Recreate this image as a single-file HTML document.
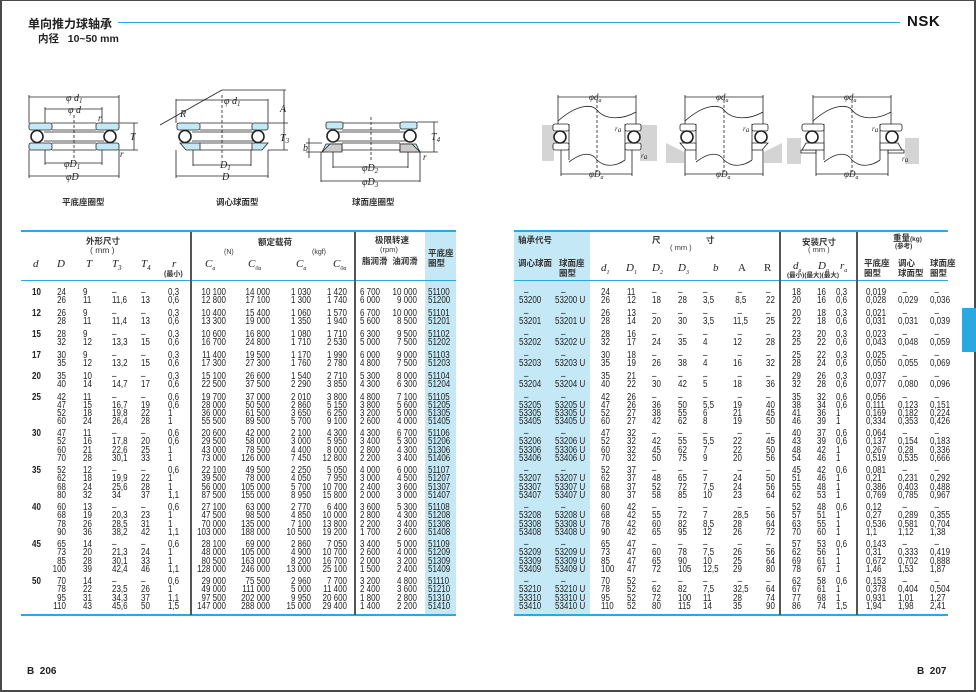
<!DOCTYPE html>
<html><head><meta charset="utf-8">
<style>
*{margin:0;padding:0;box-sizing:border-box}
body{width:976px;height:692px;position:relative;background:#fff;overflow:hidden;font-family:"Liberation Sans","Noto Sans CJK SC",sans-serif;color:#222}
.frame{position:absolute;left:0;top:0;width:976px;height:692px;border:2px solid #4a4a4a;border-top-width:1px}
.abs{position:absolute}
.cj{font-family:"Liberation Sans","Noto Sans CJK SC",sans-serif;font-size:8.5px;font-weight:bold;color:#333;white-space:nowrap;line-height:10px}
.it{font-family:"Liberation Serif",serif;font-style:italic;font-size:11px;color:#222}
.r{position:absolute;left:0;height:9px;width:976px;font-family:"Liberation Sans",sans-serif;font-size:10px;line-height:9px;white-space:nowrap}
.r i{position:absolute;font-style:normal;top:0;transform:scaleX(.8);transform-origin:left center}
.r i.rt{transform-origin:right center}
.ld{left:32px;font-weight:bold}
.lD{left:40px;width:26px;text-align:right}
.lT{left:83px}.l3{left:112px}.l4{left:141px}.lr{left:168px}
.n1{left:180px;width:46px;text-align:right}
.n2{left:224px;width:46px;text-align:right}
.k1{left:271px;width:40px;text-align:right}
.k2{left:307px;width:40px;text-align:right}
.g{left:350px;width:30px;text-align:right}
.o{left:380px;width:37px;text-align:right}
.cd{left:428px}
.c1{left:519px}.c2{left:555px}
.c1d{left:524px}.c2d{left:561px}
.p1{left:601px}.p2{left:627px}.p3{left:652px}.p4{left:678px}.pb{left:703px}.pA{left:733px}.pR{left:766px}
.q1{left:792px}.q2{left:817px}.q3{left:836px}
.w1{left:866px}.w2{left:898px}.w3{left:930px}
</style></head><body>
<div class="frame"></div>

<div class="abs" style="left:28px;top:15px;font-size:12px;font-weight:bold;color:#222;font-family:'Liberation Sans','Noto Sans CJK SC',sans-serif">单向推力球轴承</div>
<div class="abs" style="left:118px;top:22px;width:782px;height:1px;background:#29a9e0"></div>
<div class="abs" style="left:38px;top:31px;font-size:10.5px;font-weight:bold;font-family:'Liberation Sans','Noto Sans CJK SC',sans-serif">内径&nbsp;&nbsp;&nbsp;10~50 mm</div>
<div class="abs" style="left:907px;top:13px;font-size:15px;font-weight:bold;letter-spacing:0.5px;color:#111">NSK</div>

<svg class="abs" style="left:0;top:80px" width="976" height="135" viewBox="0 80 976 135" font-family="Liberation Serif" font-style="italic" font-size="10">
<g stroke="#222" stroke-width="0.8" fill="none">
 <path d="M29 95V123M119 95V123M29 97H119M45 107V123M102 107V123M45 109H102"/>
 <path d="M29 150V178M119 150V178M29 176H119M45 150V165M102 150V165M45 163H102"/>
 <path d="M52 123H96M52 130H96M44 132H104M44 141H104M52 143H96M52 150H96"/>
 <rect x="29" y="123" width="23" height="7" rx="2" fill="#c5e8f7"/><rect x="96" y="123" width="23" height="7" rx="2" fill="#c5e8f7"/>
 <rect x="29" y="143" width="23" height="7" rx="2" fill="#c5e8f7"/><rect x="96" y="143" width="23" height="7" rx="2" fill="#c5e8f7"/>
 <circle cx="37" cy="136.5" r="6" fill="#fff" stroke-width="1.6"/><circle cx="110" cy="136.5" r="6" fill="#fff" stroke-width="1.6"/>
 <path d="M74 115V158" stroke-dasharray="3 2"/>
 <path d="M119 123H138M119 150H138M134 123V150"/>
 <path d="M176 99V123M268 99V123M176 100H268M222 90H286M284 90V150M268 123H288M268 150H288"/>
 <path d="M222 90L160 125"/>
 <path d="M176 150V178M268 150V178M176 176H268M193 150V166M251 150V166M193 165H251"/>
 <path d="M200 123H252M200 130H252M192 132H260M192 141H260M200 143H252M200 150H252"/>
 <rect x="177" y="123" width="23" height="7" rx="2" fill="#c5e8f7"/><rect x="252" y="123" width="16" height="7" rx="2" fill="#c5e8f7"/>
 <path d="M180 143H200V150H186Z" fill="#c5e8f7"/><path d="M252 143H268L262 150H252Z" fill="#c5e8f7"/>
 <circle cx="185" cy="136.5" r="6" fill="#fff" stroke-width="1.6"/><circle cx="258" cy="136.5" r="6" fill="#fff" stroke-width="1.6"/>
 <path d="M222 95V158" stroke-dasharray="3 2"/>
 <path d="M342 123H400M342 130H400M334 132H408M334 141H408M342 143H400M342 150H400"/>
 <rect x="326" y="122" width="17" height="7" rx="2" fill="#c5e8f7"/><rect x="400" y="122" width="17" height="7" rx="2" fill="#c5e8f7"/>
 <path d="M322 152L326 144H342V150Z" fill="#c5e8f7"/><path d="M400 144H416L420 152H400Z" fill="#c5e8f7"/>
 <path d="M322 152L330 144H342V152Z" fill="#ccc"/><path d="M400 152V144H412L420 152Z" fill="#ccc"/>
 <circle cx="333" cy="136" r="6" fill="#fff" stroke-width="1.6"/><circle cx="410" cy="136" r="6" fill="#fff" stroke-width="1.6"/>
 <path d="M371 117V160" stroke-dasharray="3 2"/>
 <path d="M333 152V168M408 152V168M333 167H408M321 152V182M420 152V182M321 181H420"/>
 <path d="M417 122H438M420 152H438M434 122V152M306 143H322M306 152H322M309 138V158"/>
</g>
<g fill="#222">
 <text x="66" y="101">φ d<tspan font-size="7" dy="2">1</tspan></text>
 <text x="68" y="113">φ d</text>
 <text x="98" y="121" font-size="9">r</text>
 <text x="64" y="167">φD<tspan font-size="7" dy="2">1</tspan></text>
 <text x="66" y="180">φD</text>
 <text x="130" y="140">T</text>
 <text x="120" y="157" font-size="9">r</text>
 <text x="224" y="104">φ d<tspan font-size="7" dy="2">1</tspan></text>
 <text x="180" y="117">R</text>
 <text x="280" y="112">A</text>
 <text x="280" y="141">T<tspan font-size="7" dy="2">3</tspan></text>
 <text x="220" y="168">D<tspan font-size="7" dy="2">1</tspan></text>
 <text x="222" y="180">D</text>
 <text x="362" y="171">φD<tspan font-size="7" dy="2">2</tspan></text>
 <text x="362" y="185">φD<tspan font-size="7" dy="2">3</tspan></text>
 <text x="431" y="140">T<tspan font-size="7" dy="2">4</tspan></text>
 <text x="303" y="151">b</text>
 <text x="423" y="160" font-size="9">r</text>
</g>
<g stroke="#222" stroke-width="0.8" fill="none">
 <g transform="translate(597,0)">
  <rect x="-55" y="125" width="12" height="36" fill="#d4d4d4" stroke="none"/><rect x="43" y="125" width="17" height="36" fill="#d4d4d4" stroke="none"/>
  <path d="M-39 95V124M39 95V124M-39 97H39"/>
  <path d="M-39 121C-20 104 -5 104 0 110C8 120 25 120 39 112"/>
  <path d="M-28 124V160M28 124V160M-28 162C-15 152 -5 152 0 160C8 168 20 166 28 160"/>
  <rect x="-44" y="124" width="16" height="7" rx="2" fill="#fff"/><rect x="28" y="124" width="16" height="7" rx="2" fill="#fff"/>
  <rect x="-44" y="143" width="16" height="7" rx="2" fill="#fff"/><rect x="28" y="143" width="16" height="7" rx="2" fill="#fff"/>
  <circle cx="-37" cy="137" r="6" fill="#fff" stroke-width="1.6"/><circle cx="37" cy="137" r="6" fill="#fff" stroke-width="1.6"/>
  <path d="M0 100V172" stroke-dasharray="3 2"/>
  <path d="M-36 150V176M35 150V176M-36 174H35"/>
 </g>
 <g transform="translate(724,0)">
  <path d="M-58 143L-40 152V163H-58Z" fill="#d4d4d4" stroke="none"/><path d="M58 143L40 152V163H58Z" fill="#d4d4d4" stroke="none"/>
  <path d="M-39 95V124M39 95V124M-39 97H39"/>
  <path d="M-39 121C-20 104 -5 104 0 110C8 120 25 120 39 112"/>
  <path d="M-28 124V160M28 124V160M-28 162C-15 152 -5 152 0 160C8 168 20 166 28 160"/>
  <rect x="-44" y="124" width="16" height="7" rx="2" fill="#fff"/><rect x="28" y="124" width="16" height="7" rx="2" fill="#fff"/>
  <path d="M-44 143H-28V150H-38Z" fill="#fff"/><path d="M28 143H44L38 150H28Z" fill="#fff"/>
  <circle cx="-37" cy="137" r="6" fill="#fff" stroke-width="1.6"/><circle cx="37" cy="137" r="6" fill="#fff" stroke-width="1.6"/>
  <path d="M0 100V172" stroke-dasharray="3 2"/>
  <path d="M-39 150V176M39 150V176M-39 174H39"/>
 </g>
 <g transform="translate(852,0)">
  <rect x="-65" y="138" width="14" height="26" fill="#d4d4d4" stroke="none"/><rect x="53" y="138" width="14" height="26" fill="#d4d4d4" stroke="none"/>
  <path d="M-51 150H-36V153H-51ZM36 150H52V153H36Z" fill="#fff"/>
  <path d="M-39 95V124M39 95V124M-39 97H39"/>
  <path d="M-39 121C-20 104 -5 104 0 110C8 120 25 120 39 112"/>
  <path d="M-28 124V160M28 124V160M-28 162C-15 152 -5 152 0 160C8 168 20 166 28 160"/>
  <rect x="-50" y="124" width="22" height="7" rx="2" fill="#fff"/><rect x="28" y="124" width="22" height="7" rx="2" fill="#fff"/>
  <path d="M-46 143H-28V150H-50Z" fill="#fff"/><path d="M28 143H46L50 150H28Z" fill="#fff"/>
  <circle cx="-40" cy="137" r="6" fill="#fff" stroke-width="1.6"/><circle cx="40" cy="137" r="6" fill="#fff" stroke-width="1.6"/>
  <path d="M0 100V172" stroke-dasharray="3 2"/>
  <path d="M-36 150V176M36 150V176M-36 174H36"/>
 </g>
</g>
<g fill="#222" font-size="9">
 <text x="589" y="100">φd<tspan font-size="6" dy="2">a</tspan></text>
 <text x="589" y="177">φD<tspan font-size="6" dy="2">a</tspan></text>
 <text x="615" y="131" font-size="7">r<tspan dy="1">a</tspan></text>
 <text x="641" y="158" font-size="7">r<tspan dy="1">a</tspan></text>
 <text x="716" y="100">φd<tspan font-size="6" dy="2">a</tspan></text>
 <text x="716" y="177">φD<tspan font-size="6" dy="2">a</tspan></text>
 <text x="743" y="131" font-size="7">r<tspan dy="1">a</tspan></text>
 <text x="844" y="100">φd<tspan font-size="6" dy="2">a</tspan></text>
 <text x="844" y="177">φD<tspan font-size="6" dy="2">a</tspan></text>
 <text x="872" y="131" font-size="7">r<tspan dy="1">a</tspan></text>
 <text x="902" y="161" font-size="7">r<tspan dy="1">a</tspan></text>
</g>
</svg>
<div class="abs cj" style="left:62px;top:197px">平底座圈型</div>
<div class="abs cj" style="left:216px;top:197px">调心球面型</div>
<div class="abs cj" style="left:352px;top:197px">球面座圈型</div>

<div class="abs" style="left:425px;top:232px;width:31px;height:383px;background:#c5e8f7"></div>
<div class="abs" style="left:21px;top:230px;width:435px;height:2px;background:#29a9e0"></div>
<div class="abs" style="left:21px;top:280px;width:435px;height:1px;background:#29a9e0"></div>
<div class="abs" style="left:21px;top:614px;width:435px;height:2px;background:#29a9e0"></div>
<div class="abs" style="left:190px;top:232px;width:1.5px;height:383px;background:#555"></div>
<div class="abs" style="left:354px;top:232px;width:1.5px;height:383px;background:#555"></div>

<div class="abs cj" style="left:86px;top:236px">外形尺寸</div>
<div class="abs cj" style="left:90px;top:245px;font-weight:normal">( mm )</div>
<div class="abs it" style="left:33px;top:258px">d</div>
<div class="abs it" style="left:57px;top:258px">D</div>
<div class="abs it" style="left:86px;top:258px">T</div>
<div class="abs it" style="left:112px;top:258px">T<sub style="font-size:7px">3</sub></div>
<div class="abs it" style="left:141px;top:258px">T<sub style="font-size:7px">4</sub></div>
<div class="abs it" style="left:172px;top:258px">r</div>
<div class="abs cj" style="left:164px;top:270px;font-size:7px">(最小)</div>
<div class="abs cj" style="left:258px;top:237px">额定载荷</div>
<div class="abs cj" style="left:224px;top:248px;font-size:7px;font-weight:normal">(N)</div>
<div class="abs cj" style="left:312px;top:248px;font-size:7px;font-weight:normal">(kgf)</div>
<div class="abs it" style="left:205px;top:258px">C<sub style="font-size:6px">a</sub></div>
<div class="abs it" style="left:248px;top:258px">C<sub style="font-size:6px">0a</sub></div>
<div class="abs it" style="left:296px;top:258px">C<sub style="font-size:6px">a</sub></div>
<div class="abs it" style="left:333px;top:258px">C<sub style="font-size:6px">0a</sub></div>
<div class="abs cj" style="left:375px;top:235px">极限转速</div>
<div class="abs cj" style="left:380px;top:245px;font-size:7.5px;font-weight:normal">(rpm)</div>
<div class="abs cj" style="left:362px;top:256px">脂润滑&nbsp;&nbsp;油润滑</div>
<div class="abs cj" style="left:428px;top:248px;width:28px;white-space:normal">平底座圈型</div>

<div class="r" style="top:288px"><i class="ld">10</i><i class="lD rt">24</i><i class="lT">9</i><i class="l3">–</i><i class="l4">–</i><i class="lr">0,3</i><i class="n1 rt">10 100</i><i class="n2 rt">14 000</i><i class="k1 rt">1 030</i><i class="k2 rt">1 420</i><i class="g rt">6 700</i><i class="o rt">10 000</i><i class="cd">51100</i></div>
<div class="r" style="top:296px"><i class="lD rt">26</i><i class="lT">11</i><i class="l3">11,6</i><i class="l4">13</i><i class="lr">0,6</i><i class="n1 rt">12 800</i><i class="n2 rt">17 100</i><i class="k1 rt">1 300</i><i class="k2 rt">1 740</i><i class="g rt">6 000</i><i class="o rt">9 000</i><i class="cd">51200</i></div>
<div class="r" style="top:309px"><i class="ld">12</i><i class="lD rt">26</i><i class="lT">9</i><i class="l3">–</i><i class="l4">–</i><i class="lr">0,3</i><i class="n1 rt">10 400</i><i class="n2 rt">15 400</i><i class="k1 rt">1 060</i><i class="k2 rt">1 570</i><i class="g rt">6 700</i><i class="o rt">10 000</i><i class="cd">51101</i></div>
<div class="r" style="top:317px"><i class="lD rt">28</i><i class="lT">11</i><i class="l3">11,4</i><i class="l4">13</i><i class="lr">0,6</i><i class="n1 rt">13 300</i><i class="n2 rt">19 000</i><i class="k1 rt">1 350</i><i class="k2 rt">1 940</i><i class="g rt">5 600</i><i class="o rt">8 500</i><i class="cd">51201</i></div>
<div class="r" style="top:330px"><i class="ld">15</i><i class="lD rt">28</i><i class="lT">9</i><i class="l3">–</i><i class="l4">–</i><i class="lr">0,3</i><i class="n1 rt">10 600</i><i class="n2 rt">16 800</i><i class="k1 rt">1 080</i><i class="k2 rt">1 710</i><i class="g rt">6 300</i><i class="o rt">9 500</i><i class="cd">51102</i></div>
<div class="r" style="top:338px"><i class="lD rt">32</i><i class="lT">12</i><i class="l3">13,3</i><i class="l4">15</i><i class="lr">0,6</i><i class="n1 rt">16 700</i><i class="n2 rt">24 800</i><i class="k1 rt">1 710</i><i class="k2 rt">2 530</i><i class="g rt">5 000</i><i class="o rt">7 500</i><i class="cd">51202</i></div>
<div class="r" style="top:351px"><i class="ld">17</i><i class="lD rt">30</i><i class="lT">9</i><i class="l3">–</i><i class="l4">–</i><i class="lr">0,3</i><i class="n1 rt">11 400</i><i class="n2 rt">19 500</i><i class="k1 rt">1 170</i><i class="k2 rt">1 990</i><i class="g rt">6 000</i><i class="o rt">9 000</i><i class="cd">51103</i></div>
<div class="r" style="top:359px"><i class="lD rt">35</i><i class="lT">12</i><i class="l3">13,2</i><i class="l4">15</i><i class="lr">0,6</i><i class="n1 rt">17 300</i><i class="n2 rt">27 300</i><i class="k1 rt">1 760</i><i class="k2 rt">2 780</i><i class="g rt">4 800</i><i class="o rt">7 500</i><i class="cd">51203</i></div>
<div class="r" style="top:372px"><i class="ld">20</i><i class="lD rt">35</i><i class="lT">10</i><i class="l3">–</i><i class="l4">–</i><i class="lr">0,3</i><i class="n1 rt">15 100</i><i class="n2 rt">26 600</i><i class="k1 rt">1 540</i><i class="k2 rt">2 710</i><i class="g rt">5 300</i><i class="o rt">8 000</i><i class="cd">51104</i></div>
<div class="r" style="top:380px"><i class="lD rt">40</i><i class="lT">14</i><i class="l3">14,7</i><i class="l4">17</i><i class="lr">0,6</i><i class="n1 rt">22 500</i><i class="n2 rt">37 500</i><i class="k1 rt">2 290</i><i class="k2 rt">3 850</i><i class="g rt">4 300</i><i class="o rt">6 300</i><i class="cd">51204</i></div>

<div class="r" style="top:393px"><i class="ld">25</i><i class="lD rt">42</i><i class="lT">11</i><i class="l3">–</i><i class="l4">–</i><i class="lr">0,6</i><i class="n1 rt">19 700</i><i class="n2 rt">37 000</i><i class="k1 rt">2 010</i><i class="k2 rt">3 800</i><i class="g rt">4 800</i><i class="o rt">7 100</i><i class="cd">51105</i></div>
<div class="r" style="top:401px"><i class="lD rt">47</i><i class="lT">15</i><i class="l3">16,7</i><i class="l4">19</i><i class="lr">0,6</i><i class="n1 rt">28 000</i><i class="n2 rt">50 500</i><i class="k1 rt">2 860</i><i class="k2 rt">5 150</i><i class="g rt">3 800</i><i class="o rt">5 600</i><i class="cd">51205</i></div>
<div class="r" style="top:409px"><i class="lD rt">52</i><i class="lT">18</i><i class="l3">19,8</i><i class="l4">22</i><i class="lr">1</i><i class="n1 rt">36 000</i><i class="n2 rt">61 500</i><i class="k1 rt">3 650</i><i class="k2 rt">6 250</i><i class="g rt">3 200</i><i class="o rt">5 000</i><i class="cd">51305</i></div>
<div class="r" style="top:417px"><i class="lD rt">60</i><i class="lT">24</i><i class="l3">26,4</i><i class="l4">28</i><i class="lr">1</i><i class="n1 rt">55 500</i><i class="n2 rt">89 500</i><i class="k1 rt">5 700</i><i class="k2 rt">9 100</i><i class="g rt">2 600</i><i class="o rt">4 000</i><i class="cd">51405</i></div>

<div class="r" style="top:429px"><i class="ld">30</i><i class="lD rt">47</i><i class="lT">11</i><i class="l3">–</i><i class="l4">–</i><i class="lr">0,6</i><i class="n1 rt">20 600</i><i class="n2 rt">42 000</i><i class="k1 rt">2 100</i><i class="k2 rt">4 300</i><i class="g rt">4 300</i><i class="o rt">6 700</i><i class="cd">51106</i></div>
<div class="r" style="top:437px"><i class="lD rt">52</i><i class="lT">16</i><i class="l3">17,8</i><i class="l4">20</i><i class="lr">0,6</i><i class="n1 rt">29 500</i><i class="n2 rt">58 000</i><i class="k1 rt">3 000</i><i class="k2 rt">5 950</i><i class="g rt">3 400</i><i class="o rt">5 300</i><i class="cd">51206</i></div>
<div class="r" style="top:446px"><i class="lD rt">60</i><i class="lT">21</i><i class="l3">22,6</i><i class="l4">25</i><i class="lr">1</i><i class="n1 rt">43 000</i><i class="n2 rt">78 500</i><i class="k1 rt">4 400</i><i class="k2 rt">8 000</i><i class="g rt">2 800</i><i class="o rt">4 300</i><i class="cd">51306</i></div>
<div class="r" style="top:454px"><i class="lD rt">70</i><i class="lT">28</i><i class="l3">30,1</i><i class="l4">33</i><i class="lr">1</i><i class="n1 rt">73 000</i><i class="n2 rt">126 000</i><i class="k1 rt">7 450</i><i class="k2 rt">12 800</i><i class="g rt">2 200</i><i class="o rt">3 400</i><i class="cd">51406</i></div>

<div class="r" style="top:466px"><i class="ld">35</i><i class="lD rt">52</i><i class="lT">12</i><i class="l3">–</i><i class="l4">–</i><i class="lr">0,6</i><i class="n1 rt">22 100</i><i class="n2 rt">49 500</i><i class="k1 rt">2 250</i><i class="k2 rt">5 050</i><i class="g rt">4 000</i><i class="o rt">6 000</i><i class="cd">51107</i></div>
<div class="r" style="top:474px"><i class="lD rt">62</i><i class="lT">18</i><i class="l3">19,9</i><i class="l4">22</i><i class="lr">1</i><i class="n1 rt">39 500</i><i class="n2 rt">78 000</i><i class="k1 rt">4 050</i><i class="k2 rt">7 950</i><i class="g rt">3 000</i><i class="o rt">4 500</i><i class="cd">51207</i></div>
<div class="r" style="top:483px"><i class="lD rt">68</i><i class="lT">24</i><i class="l3">25,6</i><i class="l4">28</i><i class="lr">1</i><i class="n1 rt">56 000</i><i class="n2 rt">105 000</i><i class="k1 rt">5 700</i><i class="k2 rt">10 700</i><i class="g rt">2 400</i><i class="o rt">3 600</i><i class="cd">51307</i></div>
<div class="r" style="top:491px"><i class="lD rt">80</i><i class="lT">32</i><i class="l3">34</i><i class="l4">37</i><i class="lr">1,1</i><i class="n1 rt">87 500</i><i class="n2 rt">155 000</i><i class="k1 rt">8 950</i><i class="k2 rt">15 800</i><i class="g rt">2 000</i><i class="o rt">3 000</i><i class="cd">51407</i></div>

<div class="r" style="top:503px"><i class="ld">40</i><i class="lD rt">60</i><i class="lT">13</i><i class="l3">–</i><i class="l4">–</i><i class="lr">0,6</i><i class="n1 rt">27 100</i><i class="n2 rt">63 000</i><i class="k1 rt">2 770</i><i class="k2 rt">6 400</i><i class="g rt">3 600</i><i class="o rt">5 300</i><i class="cd">51108</i></div>
<div class="r" style="top:511px"><i class="lD rt">68</i><i class="lT">19</i><i class="l3">20,3</i><i class="l4">23</i><i class="lr">1</i><i class="n1 rt">47 500</i><i class="n2 rt">98 500</i><i class="k1 rt">4 850</i><i class="k2 rt">10 000</i><i class="g rt">2 800</i><i class="o rt">4 300</i><i class="cd">51208</i></div>
<div class="r" style="top:520px"><i class="lD rt">78</i><i class="lT">26</i><i class="l3">28,5</i><i class="l4">31</i><i class="lr">1</i><i class="n1 rt">70 000</i><i class="n2 rt">135 000</i><i class="k1 rt">7 100</i><i class="k2 rt">13 800</i><i class="g rt">2 200</i><i class="o rt">3 400</i><i class="cd">51308</i></div>
<div class="r" style="top:528px"><i class="lD rt">90</i><i class="lT">36</i><i class="l3">38,2</i><i class="l4">42</i><i class="lr">1,1</i><i class="n1 rt">103 000</i><i class="n2 rt">188 000</i><i class="k1 rt">10 500</i><i class="k2 rt">19 200</i><i class="g rt">1 700</i><i class="o rt">2 600</i><i class="cd">51408</i></div>

<div class="r" style="top:540px"><i class="ld">45</i><i class="lD rt">65</i><i class="lT">14</i><i class="l3">–</i><i class="l4">–</i><i class="lr">0,6</i><i class="n1 rt">28 100</i><i class="n2 rt">69 000</i><i class="k1 rt">2 860</i><i class="k2 rt">7 050</i><i class="g rt">3 400</i><i class="o rt">5 000</i><i class="cd">51109</i></div>
<div class="r" style="top:548px"><i class="lD rt">73</i><i class="lT">20</i><i class="l3">21,3</i><i class="l4">24</i><i class="lr">1</i><i class="n1 rt">48 000</i><i class="n2 rt">105 000</i><i class="k1 rt">4 900</i><i class="k2 rt">10 700</i><i class="g rt">2 600</i><i class="o rt">4 000</i><i class="cd">51209</i></div>
<div class="r" style="top:557px"><i class="lD rt">85</i><i class="lT">28</i><i class="l3">30,1</i><i class="l4">33</i><i class="lr">1</i><i class="n1 rt">80 500</i><i class="n2 rt">163 000</i><i class="k1 rt">8 200</i><i class="k2 rt">16 700</i><i class="g rt">2 000</i><i class="o rt">3 200</i><i class="cd">51309</i></div>
<div class="r" style="top:565px"><i class="lD rt">100</i><i class="lT">39</i><i class="l3">42,4</i><i class="l4">46</i><i class="lr">1,1</i><i class="n1 rt">128 000</i><i class="n2 rt">246 000</i><i class="k1 rt">13 000</i><i class="k2 rt">25 100</i><i class="g rt">1 500</i><i class="o rt">2 400</i><i class="cd">51409</i></div>

<div class="r" style="top:577px"><i class="ld">50</i><i class="lD rt">70</i><i class="lT">14</i><i class="l3">–</i><i class="l4">–</i><i class="lr">0,6</i><i class="n1 rt">29 000</i><i class="n2 rt">75 500</i><i class="k1 rt">2 960</i><i class="k2 rt">7 700</i><i class="g rt">3 200</i><i class="o rt">4 800</i><i class="cd">51110</i></div>
<div class="r" style="top:585px"><i class="lD rt">78</i><i class="lT">22</i><i class="l3">23,5</i><i class="l4">26</i><i class="lr">1</i><i class="n1 rt">49 000</i><i class="n2 rt">111 000</i><i class="k1 rt">5 000</i><i class="k2 rt">11 400</i><i class="g rt">2 400</i><i class="o rt">3 600</i><i class="cd">51210</i></div>
<div class="r" style="top:594px"><i class="lD rt">95</i><i class="lT">31</i><i class="l3">34,3</i><i class="l4">37</i><i class="lr">1,1</i><i class="n1 rt">97 500</i><i class="n2 rt">202 000</i><i class="k1 rt">9 950</i><i class="k2 rt">20 600</i><i class="g rt">1 800</i><i class="o rt">2 800</i><i class="cd">51310</i></div>
<div class="r" style="top:602px"><i class="lD rt">110</i><i class="lT">43</i><i class="l3">45,6</i><i class="l4">50</i><i class="lr">1,5</i><i class="n1 rt">147 000</i><i class="n2 rt">288 000</i><i class="k1 rt">15 000</i><i class="k2 rt">29 400</i><i class="g rt">1 400</i><i class="o rt">2 200</i><i class="cd">51410</i></div>

<div class="abs" style="left:514px;top:232px;width:76px;height:383px;background:#c5e8f7"></div>
<div class="abs" style="left:514px;top:230px;width:434px;height:2px;background:#29a9e0"></div>
<div class="abs" style="left:514px;top:280px;width:434px;height:1px;background:#29a9e0"></div>
<div class="abs" style="left:514px;top:614px;width:434px;height:2px;background:#29a9e0"></div>
<div class="abs" style="left:779px;top:232px;width:1.5px;height:383px;background:#555"></div>
<div class="abs" style="left:856px;top:232px;width:1.5px;height:383px;background:#555"></div>
<div class="abs" style="left:962px;top:308px;width:14px;height:44px;background:#29a9e0"></div>

<div class="abs cj" style="left:518px;top:235px">轴承代号</div>
<div class="abs cj" style="left:518px;top:258px">调心球面</div>
<div class="abs cj" style="left:559px;top:258px;width:30px;white-space:normal">球面座圈型</div>
<div class="abs cj" style="left:652px;top:235px">尺</div>
<div class="abs cj" style="left:706px;top:235px">寸</div>
<div class="abs cj" style="left:670px;top:243px;font-size:7.5px;font-weight:normal">( mm )</div>
<div class="abs it" style="left:601px;top:262px">d<sub style="font-size:6px">1</sub></div>
<div class="abs it" style="left:626px;top:262px">D<sub style="font-size:6px">1</sub></div>
<div class="abs it" style="left:652px;top:262px">D<sub style="font-size:6px">2</sub></div>
<div class="abs it" style="left:678px;top:262px">D<sub style="font-size:6px">3</sub></div>
<div class="abs it" style="left:713px;top:262px">b</div>
<div class="abs" style="left:738px;top:262px;font-family:'Liberation Serif',serif;font-size:11px">A</div>
<div class="abs" style="left:764px;top:262px;font-family:'Liberation Serif',serif;font-size:11px">R</div>
<div class="abs cj" style="left:802px;top:237px">安装尺寸</div>
<div class="abs cj" style="left:808px;top:245px;font-size:7.5px;font-weight:normal">( mm )</div>
<div class="abs it" style="left:793px;top:260px">d<sub style="font-size:6px">a</sub></div>
<div class="abs it" style="left:818px;top:260px">D<sub style="font-size:6px">a</sub></div>
<div class="abs it" style="left:840px;top:260px">r<sub style="font-size:6px">a</sub></div>
<div class="abs cj" style="left:787px;top:271px;font-size:6.5px">(最小)(最大)(最大)</div>
<div class="abs cj" style="left:893px;top:233px">重量<span style="font-size:6.5px">(kg)</span></div>
<div class="abs cj" style="left:895px;top:242px;font-size:6.5px">(参考)</div>
<div class="abs cj" style="left:864px;top:258px">平底座<br>圈型</div>
<div class="abs cj" style="left:898px;top:258px">调心<br>球面型</div>
<div class="abs cj" style="left:930px;top:258px">球面座<br>圈型</div>

<div class="r" style="top:288px"><i class="c1d">–</i><i class="c2d">–</i><i class="p1">24</i><i class="p2">11</i><i class="p3">–</i><i class="p4">–</i><i class="pb">–</i><i class="pA">&nbsp;&nbsp;–</i><i class="pR">–</i><i class="q1">18</i><i class="q2">16</i><i class="q3">0,3</i><i class="w1">0,019</i><i class="w2">&nbsp;&nbsp;–</i><i class="w3">&nbsp;&nbsp;–</i></div>
<div class="r" style="top:296px"><i class="c1">53200</i><i class="c2">53200 U</i><i class="p1">26</i><i class="p2">12</i><i class="p3">18</i><i class="p4">28</i><i class="pb">3,5</i><i class="pA">&nbsp;8,5</i><i class="pR">22</i><i class="q1">20</i><i class="q2">16</i><i class="q3">0,6</i><i class="w1">0,028</i><i class="w2">0,029</i><i class="w3">0,036</i></div>
<div class="r" style="top:309px"><i class="c1d">–</i><i class="c2d">–</i><i class="p1">26</i><i class="p2">13</i><i class="p3">–</i><i class="p4">–</i><i class="pb">–</i><i class="pA">&nbsp;&nbsp;–</i><i class="pR">–</i><i class="q1">20</i><i class="q2">18</i><i class="q3">0,3</i><i class="w1">0,021</i><i class="w2">&nbsp;&nbsp;–</i><i class="w3">&nbsp;&nbsp;–</i></div>
<div class="r" style="top:317px"><i class="c1">53201</i><i class="c2">53201 U</i><i class="p1">28</i><i class="p2">14</i><i class="p3">20</i><i class="p4">30</i><i class="pb">3,5</i><i class="pA">11,5</i><i class="pR">25</i><i class="q1">22</i><i class="q2">18</i><i class="q3">0,6</i><i class="w1">0,031</i><i class="w2">0,031</i><i class="w3">0,039</i></div>
<div class="r" style="top:330px"><i class="c1d">–</i><i class="c2d">–</i><i class="p1">28</i><i class="p2">16</i><i class="p3">–</i><i class="p4">–</i><i class="pb">–</i><i class="pA">&nbsp;&nbsp;–</i><i class="pR">–</i><i class="q1">23</i><i class="q2">20</i><i class="q3">0,3</i><i class="w1">0,023</i><i class="w2">&nbsp;&nbsp;–</i><i class="w3">&nbsp;&nbsp;–</i></div>
<div class="r" style="top:338px"><i class="c1">53202</i><i class="c2">53202 U</i><i class="p1">32</i><i class="p2">17</i><i class="p3">24</i><i class="p4">35</i><i class="pb">4</i><i class="pA">12</i><i class="pR">28</i><i class="q1">25</i><i class="q2">22</i><i class="q3">0,6</i><i class="w1">0,043</i><i class="w2">0,048</i><i class="w3">0,059</i></div>
<div class="r" style="top:351px"><i class="c1d">–</i><i class="c2d">–</i><i class="p1">30</i><i class="p2">18</i><i class="p3">–</i><i class="p4">–</i><i class="pb">–</i><i class="pA">&nbsp;&nbsp;–</i><i class="pR">–</i><i class="q1">25</i><i class="q2">22</i><i class="q3">0,3</i><i class="w1">0,025</i><i class="w2">&nbsp;&nbsp;–</i><i class="w3">&nbsp;&nbsp;–</i></div>
<div class="r" style="top:359px"><i class="c1">53203</i><i class="c2">53203 U</i><i class="p1">35</i><i class="p2">19</i><i class="p3">26</i><i class="p4">38</i><i class="pb">4</i><i class="pA">16</i><i class="pR">32</i><i class="q1">28</i><i class="q2">24</i><i class="q3">0,6</i><i class="w1">0,050</i><i class="w2">0,055</i><i class="w3">0,069</i></div>
<div class="r" style="top:372px"><i class="c1d">–</i><i class="c2d">–</i><i class="p1">35</i><i class="p2">21</i><i class="p3">–</i><i class="p4">–</i><i class="pb">–</i><i class="pA">&nbsp;&nbsp;–</i><i class="pR">–</i><i class="q1">29</i><i class="q2">26</i><i class="q3">0,3</i><i class="w1">0,037</i><i class="w2">&nbsp;&nbsp;–</i><i class="w3">&nbsp;&nbsp;–</i></div>
<div class="r" style="top:380px"><i class="c1">53204</i><i class="c2">53204 U</i><i class="p1">40</i><i class="p2">22</i><i class="p3">30</i><i class="p4">42</i><i class="pb">5</i><i class="pA">18</i><i class="pR">36</i><i class="q1">32</i><i class="q2">28</i><i class="q3">0,6</i><i class="w1">0,077</i><i class="w2">0,080</i><i class="w3">0,096</i></div>

<div class="r" style="top:393px"><i class="c1d">–</i><i class="c2d">–</i><i class="p1">42</i><i class="p2">26</i><i class="p3">–</i><i class="p4">–</i><i class="pb">–</i><i class="pA">&nbsp;&nbsp;–</i><i class="pR">–</i><i class="q1">35</i><i class="q2">32</i><i class="q3">0,6</i><i class="w1">0,056</i><i class="w2">&nbsp;&nbsp;–</i><i class="w3">&nbsp;&nbsp;–</i></div>
<div class="r" style="top:401px"><i class="c1">53205</i><i class="c2">53205 U</i><i class="p1">47</i><i class="p2">26</i><i class="p3">36</i><i class="p4">50</i><i class="pb">5,5</i><i class="pA">19</i><i class="pR">40</i><i class="q1">38</i><i class="q2">34</i><i class="q3">0,6</i><i class="w1">0,111</i><i class="w2">0,123</i><i class="w3">0,151</i></div>
<div class="r" style="top:409px"><i class="c1">53305</i><i class="c2">53305 U</i><i class="p1">52</i><i class="p2">27</i><i class="p3">38</i><i class="p4">55</i><i class="pb">6</i><i class="pA">21</i><i class="pR">45</i><i class="q1">41</i><i class="q2">36</i><i class="q3">1</i><i class="w1">0,169</i><i class="w2">0,182</i><i class="w3">0,224</i></div>
<div class="r" style="top:417px"><i class="c1">53405</i><i class="c2">53405 U</i><i class="p1">60</i><i class="p2">27</i><i class="p3">42</i><i class="p4">62</i><i class="pb">8</i><i class="pA">19</i><i class="pR">50</i><i class="q1">46</i><i class="q2">39</i><i class="q3">1</i><i class="w1">0,334</i><i class="w2">0,353</i><i class="w3">0,426</i></div>

<div class="r" style="top:429px"><i class="c1d">–</i><i class="c2d">–</i><i class="p1">47</i><i class="p2">32</i><i class="p3">–</i><i class="p4">–</i><i class="pb">–</i><i class="pA">&nbsp;&nbsp;–</i><i class="pR">–</i><i class="q1">40</i><i class="q2">37</i><i class="q3">0,6</i><i class="w1">0,064</i><i class="w2">&nbsp;&nbsp;–</i><i class="w3">&nbsp;&nbsp;–</i></div>
<div class="r" style="top:437px"><i class="c1">53206</i><i class="c2">53206 U</i><i class="p1">52</i><i class="p2">32</i><i class="p3">42</i><i class="p4">55</i><i class="pb">5,5</i><i class="pA">22</i><i class="pR">45</i><i class="q1">43</i><i class="q2">39</i><i class="q3">0,6</i><i class="w1">0,137</i><i class="w2">0,154</i><i class="w3">0,183</i></div>
<div class="r" style="top:446px"><i class="c1">53306</i><i class="c2">53306 U</i><i class="p1">60</i><i class="p2">32</i><i class="p3">45</i><i class="p4">62</i><i class="pb">7</i><i class="pA">22</i><i class="pR">50</i><i class="q1">48</i><i class="q2">42</i><i class="q3">1</i><i class="w1">0,267</i><i class="w2">0,28</i><i class="w3">0,336</i></div>
<div class="r" style="top:454px"><i class="c1">53406</i><i class="c2">53406 U</i><i class="p1">70</i><i class="p2">32</i><i class="p3">50</i><i class="p4">75</i><i class="pb">9</i><i class="pA">20</i><i class="pR">56</i><i class="q1">54</i><i class="q2">46</i><i class="q3">1</i><i class="w1">0,519</i><i class="w2">0,535</i><i class="w3">0,666</i></div>

<div class="r" style="top:466px"><i class="c1d">–</i><i class="c2d">–</i><i class="p1">52</i><i class="p2">37</i><i class="p3">–</i><i class="p4">–</i><i class="pb">–</i><i class="pA">&nbsp;&nbsp;–</i><i class="pR">–</i><i class="q1">45</i><i class="q2">42</i><i class="q3">0,6</i><i class="w1">0,081</i><i class="w2">&nbsp;&nbsp;–</i><i class="w3">&nbsp;&nbsp;–</i></div>
<div class="r" style="top:474px"><i class="c1">53207</i><i class="c2">53207 U</i><i class="p1">62</i><i class="p2">37</i><i class="p3">48</i><i class="p4">65</i><i class="pb">7</i><i class="pA">24</i><i class="pR">50</i><i class="q1">51</i><i class="q2">46</i><i class="q3">1</i><i class="w1">0,21</i><i class="w2">0,231</i><i class="w3">0,292</i></div>
<div class="r" style="top:483px"><i class="c1">53307</i><i class="c2">53307 U</i><i class="p1">68</i><i class="p2">37</i><i class="p3">52</i><i class="p4">72</i><i class="pb">7,5</i><i class="pA">24</i><i class="pR">56</i><i class="q1">55</i><i class="q2">48</i><i class="q3">1</i><i class="w1">0,386</i><i class="w2">0,403</i><i class="w3">0,488</i></div>
<div class="r" style="top:491px"><i class="c1">53407</i><i class="c2">53407 U</i><i class="p1">80</i><i class="p2">37</i><i class="p3">58</i><i class="p4">85</i><i class="pb">10</i><i class="pA">23</i><i class="pR">64</i><i class="q1">62</i><i class="q2">53</i><i class="q3">1</i><i class="w1">0,769</i><i class="w2">0,785</i><i class="w3">0,967</i></div>

<div class="r" style="top:503px"><i class="c1d">–</i><i class="c2d">–</i><i class="p1">60</i><i class="p2">42</i><i class="p3">–</i><i class="p4">–</i><i class="pb">–</i><i class="pA">&nbsp;&nbsp;–</i><i class="pR">–</i><i class="q1">52</i><i class="q2">48</i><i class="q3">0,6</i><i class="w1">0,12</i><i class="w2">&nbsp;&nbsp;–</i><i class="w3">&nbsp;&nbsp;–</i></div>
<div class="r" style="top:511px"><i class="c1">53208</i><i class="c2">53208 U</i><i class="p1">68</i><i class="p2">42</i><i class="p3">55</i><i class="p4">72</i><i class="pb">7</i><i class="pA">28,5</i><i class="pR">56</i><i class="q1">57</i><i class="q2">51</i><i class="q3">1</i><i class="w1">0,27</i><i class="w2">0,289</i><i class="w3">0,355</i></div>
<div class="r" style="top:520px"><i class="c1">53308</i><i class="c2">53308 U</i><i class="p1">78</i><i class="p2">42</i><i class="p3">60</i><i class="p4">82</i><i class="pb">8,5</i><i class="pA">28</i><i class="pR">64</i><i class="q1">63</i><i class="q2">55</i><i class="q3">1</i><i class="w1">0,536</i><i class="w2">0,581</i><i class="w3">0,704</i></div>
<div class="r" style="top:528px"><i class="c1">53408</i><i class="c2">53408 U</i><i class="p1">90</i><i class="p2">42</i><i class="p3">65</i><i class="p4">95</i><i class="pb">12</i><i class="pA">26</i><i class="pR">72</i><i class="q1">70</i><i class="q2">60</i><i class="q3">1</i><i class="w1">1,1</i><i class="w2">1,12</i><i class="w3">1,38</i></div>

<div class="r" style="top:540px"><i class="c1d">–</i><i class="c2d">–</i><i class="p1">65</i><i class="p2">47</i><i class="p3">–</i><i class="p4">–</i><i class="pb">–</i><i class="pA">&nbsp;&nbsp;–</i><i class="pR">–</i><i class="q1">57</i><i class="q2">53</i><i class="q3">0,6</i><i class="w1">0,143</i><i class="w2">&nbsp;&nbsp;–</i><i class="w3">&nbsp;&nbsp;–</i></div>
<div class="r" style="top:548px"><i class="c1">53209</i><i class="c2">53209 U</i><i class="p1">73</i><i class="p2">47</i><i class="p3">60</i><i class="p4">78</i><i class="pb">7,5</i><i class="pA">26</i><i class="pR">56</i><i class="q1">62</i><i class="q2">56</i><i class="q3">1</i><i class="w1">0,31</i><i class="w2">0,333</i><i class="w3">0,419</i></div>
<div class="r" style="top:557px"><i class="c1">53309</i><i class="c2">53309 U</i><i class="p1">85</i><i class="p2">47</i><i class="p3">65</i><i class="p4">90</i><i class="pb">10</i><i class="pA">25</i><i class="pR">64</i><i class="q1">69</i><i class="q2">61</i><i class="q3">1</i><i class="w1">0,672</i><i class="w2">0,702</i><i class="w3">0,888</i></div>
<div class="r" style="top:565px"><i class="c1">53409</i><i class="c2">53409 U</i><i class="p1">100</i><i class="p2">47</i><i class="p3">72</i><i class="p4">105</i><i class="pb">12,5</i><i class="pA">29</i><i class="pR">80</i><i class="q1">78</i><i class="q2">67</i><i class="q3">1</i><i class="w1">1,46</i><i class="w2">1,53</i><i class="w3">1,87</i></div>

<div class="r" style="top:577px"><i class="c1d">–</i><i class="c2d">–</i><i class="p1">70</i><i class="p2">52</i><i class="p3">–</i><i class="p4">–</i><i class="pb">–</i><i class="pA">&nbsp;&nbsp;–</i><i class="pR">–</i><i class="q1">62</i><i class="q2">58</i><i class="q3">0,6</i><i class="w1">0,153</i><i class="w2">&nbsp;&nbsp;–</i><i class="w3">&nbsp;&nbsp;–</i></div>
<div class="r" style="top:585px"><i class="c1">53210</i><i class="c2">53210 U</i><i class="p1">78</i><i class="p2">52</i><i class="p3">62</i><i class="p4">82</i><i class="pb">7,5</i><i class="pA">32,5</i><i class="pR">64</i><i class="q1">67</i><i class="q2">61</i><i class="q3">1</i><i class="w1">0,378</i><i class="w2">0,404</i><i class="w3">0,504</i></div>
<div class="r" style="top:594px"><i class="c1">53310</i><i class="c2">53310 U</i><i class="p1">95</i><i class="p2">52</i><i class="p3">72</i><i class="p4">100</i><i class="pb">11</i><i class="pA">28</i><i class="pR">74</i><i class="q1">77</i><i class="q2">68</i><i class="q3">1</i><i class="w1">0,931</i><i class="w2">1,01</i><i class="w3">1,27</i></div>
<div class="r" style="top:602px"><i class="c1">53410</i><i class="c2">53410 U</i><i class="p1">110</i><i class="p2">52</i><i class="p3">80</i><i class="p4">115</i><i class="pb">14</i><i class="pA">35</i><i class="pR">90</i><i class="q1">86</i><i class="q2">74</i><i class="q3">1,5</i><i class="w1">1,94</i><i class="w2">1,98</i><i class="w3">2,41</i></div>

<div class="abs" style="left:27px;top:666px;font-size:10px;font-weight:bold">B&nbsp;&nbsp;206</div>
<div class="abs" style="left:917px;top:666px;font-size:10px;font-weight:bold">B&nbsp;&nbsp;207</div>
</body></html>
